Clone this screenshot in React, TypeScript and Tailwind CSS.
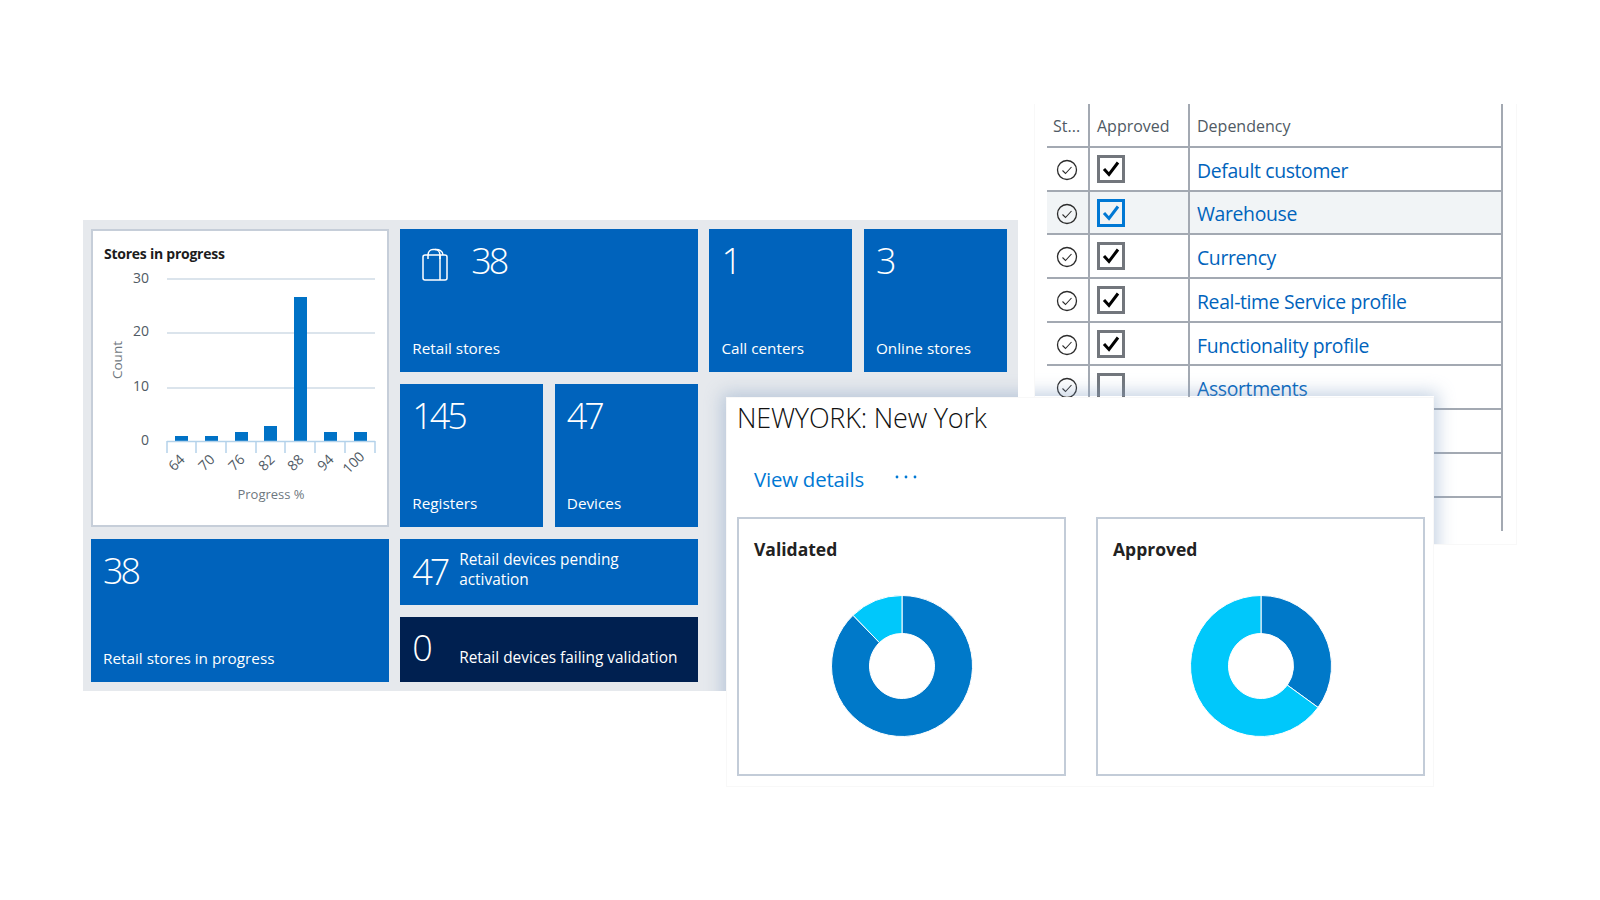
import React from "react";

const font = { fontFamily: '"Open Sans","Noto Sans",sans-serif' };

function Tile({ value, label, className = "", children }: { value: string; label: string; className?: string; children?: React.ReactNode }) {
  return (
    <div className={`relative flex flex-col justify-between bg-[#0063bc] pl-3 pb-[14px] pt-[7px] text-white ${className}`}>
      <div className="flex items-start">
        {children}
        <span className="text-[36px] font-light leading-[50px] tracking-[-3px]">{value}</span>
      </div>
      <span className="text-[15.3px] leading-5">{label}</span>
    </div>
  );
}

function Bag() {
  return (
    <svg width="28" height="34" viewBox="0 0 28 34" fill="none" stroke="white" strokeWidth="1.5" className="ml-[9px] mr-[22px] mt-[12px]">
      <rect x="2" y="7" width="24" height="25" rx="2" />
      <path d="M19 7v25" />
      <path d="M7 11V7c0-3 2-5.5 5-5.5h2c3 0 5 2.5 5 5.5v4" />
      <path d="M14 1.5c4-.5 8 1.500 8 5.500" />
    </svg>
  );
}

function Chart() {
  const bars: [number, number][] = [[175, 436], [205, 436], [235, 432], [264, 426], [294, 297], [324, 432], [354, 432]];
  const ticks = [167, 196, 226, 256, 285, 315, 345, 375];
  const labels: [string, number][] = [["64", 180], ["70", 210], ["76", 240], ["82", 270], ["88", 299], ["94", 329], ["100", 357]];
  const ox = 91, oy = 229;
  return (
    <svg width="293" height="255" viewBox={`${ox + 2} ${oy + 38} 293 255`} className="block">
      {[279, 333, 388].map((y) => (
        <line key={y} x1="167" x2="375" y1={y} y2={y} stroke="#cfdbe6" strokeWidth="1.5" />
      ))}
      {[["30", 283], ["20", 336], ["10", 391], ["0", 445]].map(([t, y]) => (
        <text key={t} x="149" y={y} textAnchor="end" fontSize="14" fill="#505a64">{t}</text>
      ))}
      <text transform="translate(122 360) rotate(-90)" textAnchor="middle" fontSize="13.5" fill="#6e7780">Count</text>
      {bars.map(([x, y]) => (
        <rect key={x} x={x} y={y} width="13" height={441 - y} fill="#0072c6" />
      ))}
      <path d="M167 441.5H375" stroke="#b4d2ea" strokeWidth="1.5" />
      {ticks.map((x) => (
        <line key={x} x1={x} x2={x} y1="441" y2="453" stroke="#b4d2ea" strokeWidth="1.5" />
      ))}
      {labels.map(([t, x]) => (
        <text key={t} transform={`translate(${x} 466) rotate(-45)`} textAnchor="middle" fontSize="14" fill="#505a64">{t}</text>
      ))}
      <text x="271" y="499" textAnchor="middle" fontSize="13" fill="#6e7780">Progress %</text>
    </svg>
  );
}

function wedge(a0: number, a1: number, r0 = 32.5, r1 = 70.5) {
  const p = (a: number, r: number) => {
    const t = ((a - 90) * Math.PI) / 180;
    return `${(80 + r * Math.cos(t)).toFixed(2)} ${(80 + r * Math.sin(t)).toFixed(2)}`;
  };
  const large = a1 - a0 > 180 ? 1 : 0;
  return `M${p(a0, r1)}A${r1} ${r1} 0 ${large} 1 ${p(a1, r1)}L${p(a1, r0)}A${r0} ${r0} 0 ${large} 0 ${p(a0, r0)}Z`;
}

function Donut({ title, split }: { title: string; split: number }) {
  return (
    <div className="flex h-[259px] w-[329px] flex-col border-2 border-[#c3ccd8] pl-[15px] pt-[18px]">
      <div className="text-[17.5px] font-bold leading-6 text-[#222]">{title}</div>
      <div className="mt-[25px] ml-[68px]">
        <svg width="160" height="160" viewBox="0 0 160 160" stroke="white" strokeWidth="1">
          <path d={wedge(0, split)} fill="#0079c9" />
          <path d={wedge(split, 360)} fill="#00c8fb" />
        </svg>
      </div>
    </div>
  );
}

function Status() {
  return (
    <svg width="22" height="22" viewBox="0 0 22 22" fill="none" stroke="#2b2b2b" className="mt-[2px]">
      <circle cx="11" cy="11" r="9.5" strokeWidth="1.3" />
      <path d="M6.5 11.5l3 3 6-6.5" strokeWidth="1.1" />
    </svg>
  );
}

function Check({ on, active }: { on: boolean; active?: boolean }) {
  const color = active ? "#0078d4" : "#000";
  return (
    <div className={`flex h-[28px] w-[28px] items-center justify-center border-[3px] ${active ? "border-[#0078d4]" : "border-[#72767c]"}`}>
      {on && (
        <svg width="20" height="20" viewBox="0 0 20 20" fill="none" stroke={color} strokeWidth="3">
          <path d="M3 10l5 5.5L17 3.5" />
        </svg>
      )}
    </div>
  );
}

const rows: { name: string; on?: boolean; active?: boolean; empty?: boolean }[] = [
  { name: "Default customer", on: true },
  { name: "Warehouse", on: true, active: true },
  { name: "Currency", on: true },
  { name: "Real-time Service profile", on: true },
  { name: "Functionality profile", on: true },
  { name: "Assortments" },
  { name: "", empty: true },
  { name: "", empty: true },
];

function Table() {
  return (
    <div className="relative ml-[12px] w-[456px] text-[#505a64]">
      <div className="grid h-[44px] grid-cols-[43px_100px_313px] border-b-2 border-[#a3a9b2] text-[16px]">
        <div className="border-r-2 border-[#a3a9b2] pl-[6px] pt-[10px]">St...</div>
        <div className="border-r-2 border-[#a3a9b2] pl-[7px] pt-[10px]">Approved</div>
        <div className="border-r-2 border-[#a3a9b2] pl-[7px] pt-[10px]">Dependency</div>
      </div>
      {rows.map((r, i) => (
        <div key={i} className={`grid h-[43.7px] grid-cols-[43px_100px_313px] border-b-2 border-[#a3a9b2] ${r.active ? "bg-[#f1f4f6]" : ""}`}>
          <div className="flex items-center justify-center border-r-2 border-[#a3a9b2] pr-[1px]">{!r.empty && <Status />}</div>
          <div className="flex items-center border-r-2 border-[#a3a9b2] pl-[7px]">{!r.empty && <Check on={!!r.on} active={r.active} />}</div>
          <div className="flex items-center border-r-2 border-[#a3a9b2] pl-[7px] pt-[3px] text-[19.4px] tracking-[-0.35px] text-[#0063bc]">{r.name}</div>
        </div>
      ))}
      <div className="grid h-[33px] grid-cols-[43px_100px_313px]">
        <div />
        <div />
        <div className="border-r-2 border-[#a3a9b2]" />
      </div>
    </div>
  );
}

function CardShadow({ left, top }: { left: number; top: number }) {
  return (
    <div
      className="absolute h-[391px] w-[708px] shadow-[0_0_16px_4px_rgba(130,160,195,0.45)]"
      style={{ left, top }}
    />
  );
}

export default function App() {
  return (
    <div className="relative h-[900px] w-[1600px] overflow-hidden bg-white" style={font}>
      {/* Table window */}
      <div className="absolute left-[1034px] top-[104px] h-[441px] w-[483px] overflow-hidden border-x border-b border-[#f8f8f8] bg-white">
        <Table />
        <CardShadow left={-309} top={292} />
      </div>

      {/* Dashboard window */}
      <div className="absolute left-[83px] top-[220px] h-[471px] w-[935px] overflow-hidden bg-[#e6e9ed] pl-2 pt-[9px]">
        <div className="grid grid-cols-[repeat(6,143px)] grid-rows-[repeat(3,143px)] gap-x-[11.6px] gap-y-3">
          <div className="col-span-2 row-span-2 border-2 border-[#c6ced9] bg-white">
            <div className="pl-[11px] pt-[13px] text-[14px] font-bold leading-5 tracking-[-0.25px] text-[#1c1c1c]">Stores in progress</div>
            <div className="mt-[3px]"><Chart /></div>
          </div>
          <Tile value="38" label="Retail stores" className="col-span-2"><Bag /></Tile>
          <Tile value="1" label="Call centers" />
          <Tile value="3" label="Online stores" />
          <Tile value="145" label="Registers" />
          <Tile value="47" label="Devices" />
          <div className="col-span-2" />
          <Tile value="38" label="Retail stores in progress" className="col-span-2" />
          <div className="col-span-2 flex flex-col gap-3">
            <div className="flex h-[65.5px] items-center bg-[#0063bc] pl-3 text-white">
              <span className="w-[47px] text-[36px] font-light tracking-[-3px]">47</span>
              <span className="-mt-1 text-[15.4px] leading-5">Retail devices pending<br />activation</span>
            </div>
            <div className="flex h-[65.5px] bg-[#002050] pl-3 text-white">
              <span className="w-[47px] text-[36px] font-light leading-[62px]">0</span>
              <span className="self-end pb-[12px] text-[15.4px] leading-6">Retail devices failing validation</span>
            </div>
          </div>
        </div>
        <CardShadow left={643} top={177} />
      </div>

      {/* Store window */}
      <div className="absolute left-[726px] top-[397px] h-[390px] w-[708px] border border-[#f8f8f8] bg-white pl-[10px]">
        <div className="mt-[2px] text-[27px] font-light leading-9 tracking-[-0.2px] text-[#111]">NEWYORK: New York</div>
        <div className="ml-[17px] mt-[29px] flex items-center text-[#0078d4]">
          <span className="text-[20.4px] leading-7 tracking-[-0.2px]">View details</span>
          <svg width="22" height="4" viewBox="0 0 22 4" fill="#0078d4" className="ml-[31px] -mt-[5px]">
            <circle cx="2" cy="2" r="1.4" /><circle cx="11" cy="2" r="1.4" /><circle cx="20" cy="2" r="1.4" />
          </svg>
        </div>
        <div className="mt-[24px] flex gap-[30px]">
          <Donut title="Validated" split={316} />
          <Donut title="Approved" split={126} />
        </div>
      </div>
    </div>
  );
}
